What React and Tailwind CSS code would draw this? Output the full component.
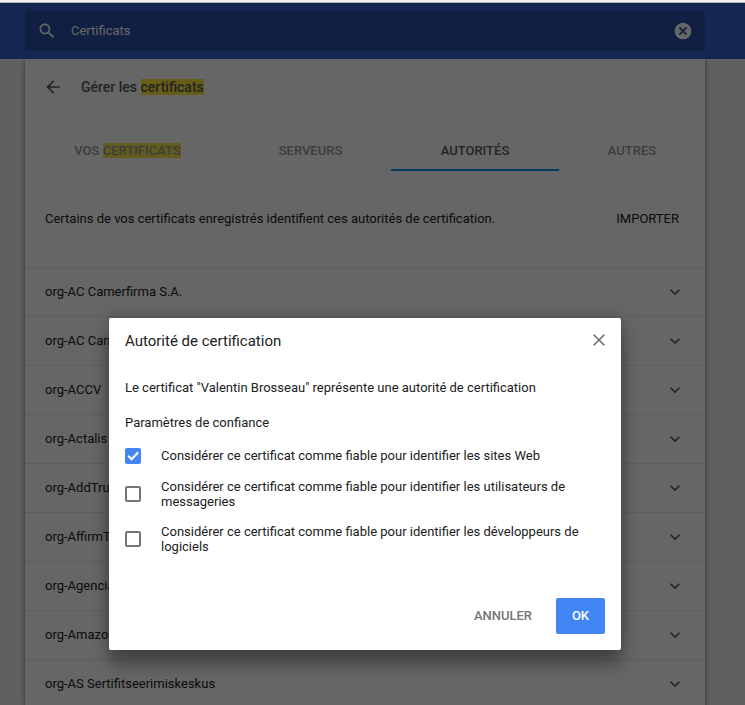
const authorities = [
  'org-AC Camerfirma S.A.',
  'org-AC Cam',
  'org-ACCV',
  'org-Actalis',
  'org-AddTru',
  'org-AffirmT',
  'org-Agencia',
  'org-Amazo',
  'org-AS Sertifitseerimiskeskus',
];

const trustSettings = [
  { label: 'Considérer ce certificat comme fiable pour identifier les sites Web', checked: true },
  { label: 'Considérer ce certificat comme fiable pour identifier les utilisateurs de messageries', checked: false },
  { label: 'Considérer ce certificat comme fiable pour identifier les développeurs de logiciels', checked: false },
];

function Icon({ d, className }) {
  return (
    <svg viewBox="0 0 24 24" fill="currentColor" className={className}>
      <path d={d} />
    </svg>
  );
}

const paths = {
  search:
    'M15.5 14h-.79l-.28-.27C15.41 12.59 16 11.11 16 9.5 16 5.91 13.09 3 9.5 3S3 5.91 3 9.5 5.91 16 9.5 16c1.61 0 3.09-.59 4.23-1.57l.27.28v.79l5 4.99L20.49 19l-4.99-5zm-6 0C7.01 14 5 11.99 5 9.5S7.01 5 9.5 5 14 7.01 14 9.5 11.99 14 9.5 14z',
  cancel:
    'M12 2C6.47 2 2 6.47 2 12s4.47 10 10 10 10-4.47 10-10S17.53 2 12 2zm5 13.59L15.59 17 12 13.41 8.41 17 7 15.59 10.59 12 7 8.41 8.41 7 12 10.59 15.59 7 17 8.41 13.41 12 17 15.59z',
  back: 'M20 11H7.83l5.59-5.59L12 4l-8 8 8 8 1.41-1.41L7.83 13H20v-2z',
  expand: 'M16.59 8.59L12 13.17 7.41 8.59 6 10l6 6 6-6z',
};

function Checkbox({ checked }) {
  if (!checked) {
    return <span className="size-4 shrink-0 rounded-[2px] border-2 border-[#757575]" />;
  }
  return (
    <span className="flex size-4 shrink-0 items-center justify-center rounded-[2px] bg-[#4285f4]">
      <svg viewBox="0 0 16 16" className="size-4" fill="none" stroke="#fff" strokeWidth="2">
        <path d="M3.2 7.8L6.6 11.2L13.2 4.2" />
      </svg>
    </span>
  );
}

function Tab({ className, children }) {
  return <div className={`flex h-10 items-center justify-center border-b-2 pt-0.5 font-medium ${className}`}>{children}</div>;
}

function SettingsPage() {
  return (
    <div className="flex h-full flex-col bg-[#f1f1f1]">
      <header className="z-10 flex h-14 shrink-0 items-start bg-[#3462cf] px-[25px] pt-2">
        <div className="flex h-10 w-[680px] items-center rounded-[2px] bg-[#294fa5] text-white">
          <Icon d={paths.search} className="ml-3 size-5" />
          <span className="ml-[14px] flex-1">Certificats</span>
          <Icon d={paths.cancel} className="mr-3 size-5" />
        </div>
      </header>
      <main className="ml-[25px] flex w-[680px] flex-1 flex-col bg-white shadow-[0_1px_5px_rgba(0,0,0,0.5)]">
        <div className="flex h-14 shrink-0 items-center pl-[18px]">
          <Icon d={paths.back} className="size-5 text-[#5a5a5a]" />
          <h1 className="ml-[18px] text-[14px] font-medium text-[#5a5a5a]">
            Gérer les <mark className="bg-[#ffeb3b] text-[#5a5a5a]">certificats</mark>
          </h1>
        </div>
        <nav className="mt-4 flex h-10 shrink-0 text-[#9a9a9a]">
          <Tab className="w-[205px] border-transparent">
            <span>VOS <mark className="bg-[#f5e64b] text-[#9a9a9a]">CERTIFICATS</mark></span>
          </Tab>
          <Tab className="w-[161px] border-transparent">SERVEURS</Tab>
          <Tab className="w-[168px] border-[#1295f0] text-[#5a5a5a]">AUTORITÉS</Tab>
          <Tab className="w-[146px] border-transparent">AUTRES</Tab>
        </nav>
        <div className="flex h-24 shrink-0 items-center justify-between pr-[26px] pl-5">
          <p>Certains de vos certificats enregistrés identifient ces autorités de certification.</p>
          <button>IMPORTER</button>
        </div>
        <ul>
          {authorities.map((name) => (
            <li key={name} className="flex h-[49px] items-center justify-between border-t border-[#ebebeb] pr-5 pl-5">
              <span>{name}</span>
              <Icon d={paths.expand} className="size-5 text-[#5a5a5a]" />
            </li>
          ))}
        </ul>
      </main>
    </div>
  );
}

function Dialog() {
  return (
    <section className="flex h-[332px] w-[512px] flex-col rounded-[2px] bg-white px-4 pb-4 text-[#212121] shadow-[0_16px_16px_rgba(0,0,0,0.28),0_0_16px_rgba(0,0,0,0.25)]">
      <div className="mt-3 flex h-[22px] items-center justify-between">
        <h2 className="text-[15px]">Autorité de certification</h2>
        <svg viewBox="0 0 12 12" className="mb-0.5 size-3 text-[#757575]" fill="none" stroke="currentColor" strokeWidth="1.5">
          <path d="M0.6 0.6L11.4 11.4M11.4 0.6L0.6 11.4" />
        </svg>
      </div>
      <p className="mt-7 leading-[15px]">Le certificat "Valentin Brosseau" représente une autorité de certification</p>
      <p className="mt-5 leading-[15px]">Paramètres de confiance</p>
      <div className="mt-[18px] flex flex-col gap-[15px]">
        {trustSettings.map(({ label, checked }) => (
          <label key={label} className="flex items-center gap-5 leading-[15px]">
            <Checkbox checked={checked} />
            <span className={checked ? 'pb-px' : ''}>{label}</span>
          </label>
        ))}
      </div>
      <div className="mt-auto flex justify-end gap-2 font-medium">
        <button className="h-9 px-4 text-[#757575]">ANNULER</button>
        <button className="h-9 w-[49px] rounded-[2px] bg-[#4285f4] text-white">OK</button>
      </div>
    </section>
  );
}

export default function App() {
  return (
    <div className="relative flex h-[705px] w-[745px] flex-col overflow-hidden font-[Roboto,sans-serif] text-[13px] text-[#212121]">
      <div className="h-[3px] shrink-0 border-b border-[#b0b0ac] bg-[#efefec]" />
      <div className="h-[702px] shrink-0 overflow-hidden">
        <SettingsPage />
      </div>
      <div className="absolute inset-x-0 top-[3px] bottom-0 z-20 bg-black/60 pt-[315px] pl-[109px]">
        <Dialog />
      </div>
    </div>
  );
}
